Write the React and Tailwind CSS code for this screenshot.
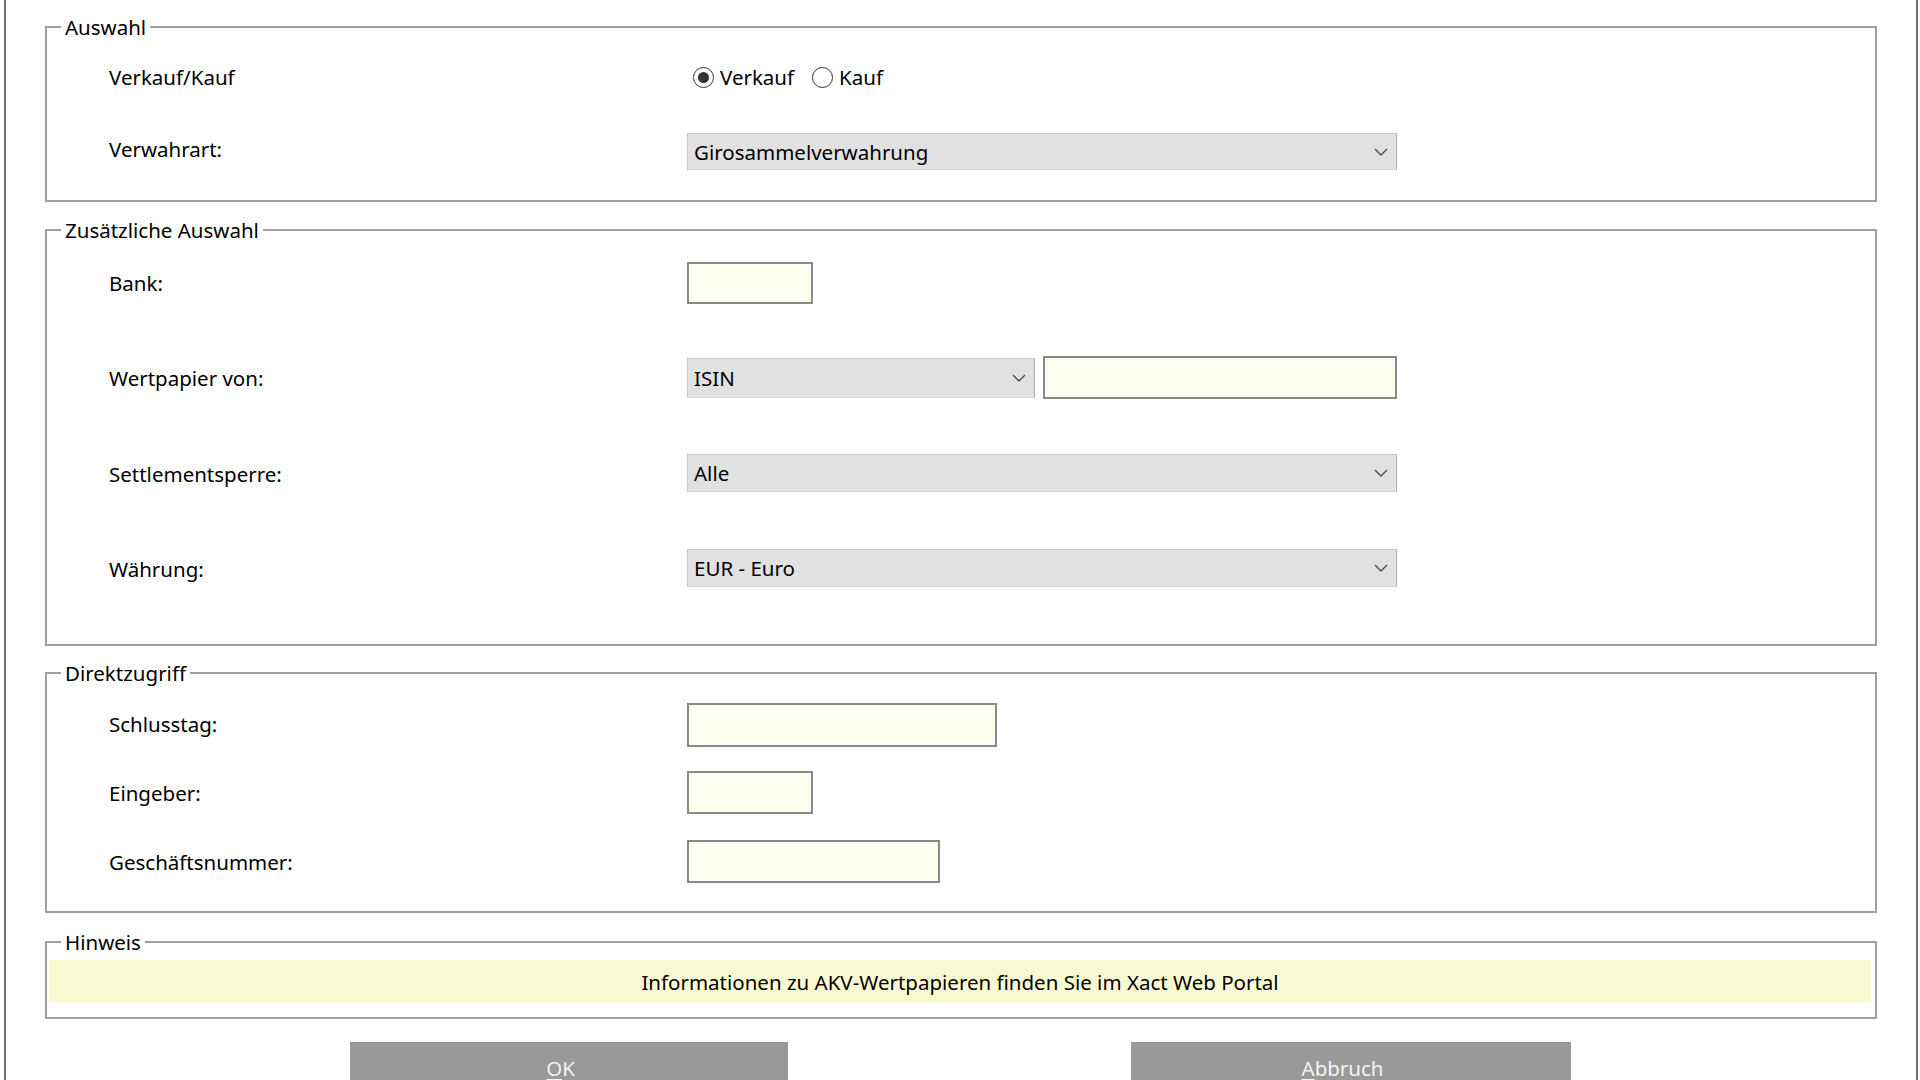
import React from 'react';

const Chevron = () => (
  <svg width="14" height="8" viewBox="0 0 14 8" fill="none">
    <path d="M1 1 L7 7 L13 1" stroke="#4a4a4a" strokeWidth="1.4" />
  </svg>
);

const Select = ({ value, width, height = 'h-[38px]' }) => (
  <div className={`${width} ${height} flex items-center justify-between pl-[6px] pr-[8px] bg-[#e1e1e1] border border-t-[#c6c6c6] border-l-[#c6c6c6] border-r-[#adadad] border-b-[#d6d6d6]`}>
    <span>{value}</span>
    <Chevron />
  </div>
);

const Input = ({ width, height = 'h-[43px]' }) => (
  <div className={`${width} ${height} bg-[#fffff0] border-2 border-[#8a8a8a]`} />
);

const Radio = ({ label, checked }) => (
  <div className="flex items-center">
    <span className="w-[21px] h-[21px] rounded-full border-[1.5px] border-[#333333] flex items-center justify-center">
      {checked && <span className="w-[11px] h-[11px] rounded-full bg-[#333333]" />}
    </span>
    <span className="ml-[6px]">{label}</span>
  </div>
);

const Group = ({ title, height, children, className = '' }) => (
  <fieldset className={`${height} ${className} min-w-0 m-0 p-0 border-2 border-[#a0a0a0]`}>
    <legend className="ml-[14px] px-[4px] leading-[24px]">{title}</legend>
    <div className="pl-[62px]">{children}</div>
  </fieldset>
);

const Row = ({ label, children, className = '', labelClass = '' }) => (
  <div className={`flex items-center ${className}`}>
    <div className={`w-[578px] shrink-0 ${labelClass}`}>{label}</div>
    {children}
  </div>
);

export default function App() {
  return (
    <div className="w-[1920px] h-[1080px] bg-white overflow-hidden text-[20.5px] leading-[24px] text-black font-['Noto_Sans','Open_Sans',Arial,sans-serif]">
      <div className="ml-[4px] w-[1914px] h-full border-x-2 border-[#707070] pl-[39px] pr-[39px] pt-[15px]">

        {/* Auswahl */}
        <Group title="Auswahl" height="h-[187px]">
          <Row label="Verkauf/Kauf" className="mt-[18px] h-[40px]">
            <div className="flex items-center gap-[18px] ml-[6px]">
              <Radio label="Verkauf" checked />
              <Radio label="Kauf" />
            </div>
          </Row>
          <Row label="Verwahrart:" className="mt-[36px]" labelClass="pb-[6px]">
            <Select value="Girosammelverwahrung" width="w-[710px]" height="h-[37px]" />
          </Row>
        </Group>

        {/* Zusätzliche Auswahl */}
        <Group title="Zusätzliche Auswahl" height="h-[428px]" className="mt-[16px]">
          <Row label="Bank:" className="mt-[20px]">
            <Input width="w-[126px]" height="h-[42px]" />
          </Row>
          <Row label="Wertpapier von:" className="mt-[52px]">
            <div className="flex items-center gap-[8px]">
              <Select value="ISIN" width="w-[348px]" height="h-[40px]" />
              <Input width="w-[354px]" />
            </div>
          </Row>
          <Row label="Settlementsperre:" className="mt-[55px]" labelClass="pt-[2px]">
            <Select value="Alle" width="w-[710px]" />
          </Row>
          <Row label="Währung:" className="mt-[57px]" labelClass="pt-[2px]">
            <Select value="EUR - Euro" width="w-[710px]" />
          </Row>
        </Group>

        {/* Direktzugriff */}
        <Group title="Direktzugriff" height="h-[252px]" className="mt-[15px]">
          <Row label="Schlusstag:" className="mt-[18px]" labelClass="pb-[2px]">
            <Input width="w-[310px]" height="h-[44px]" />
          </Row>
          <Row label="Eingeber:" className="mt-[24px]">
            <Input width="w-[126px]" />
          </Row>
          <Row label="Geschäftsnummer:" className="mt-[26px]">
            <Input width="w-[253px]" />
          </Row>
        </Group>

        {/* Hinweis */}
        <fieldset className="h-[89px] mt-[17px] min-w-0 m-0 p-0 border-2 border-[#a0a0a0]">
          <legend className="ml-[14px] px-[4px] leading-[24px]">Hinweis</legend>
          <div className="mt-[6px] ml-[2px] mr-[4px] h-[43px] bg-[#fafad2] flex items-center justify-center">
            Informationen zu AKV-Wertpapieren finden Sie im Xact Web Portal
          </div>
        </fieldset>

        {/* Buttons */}
        <div className="mt-[23px] flex justify-center gap-[343px] pr-[2px]">
          <button className="w-[438px] h-[52px] bg-[#999999] text-[#f4f4f4] flex items-center justify-center pr-[16px]">
            <span><span className="underline underline-offset-[3px]">O</span>K</span>
          </button>
          <button className="w-[440px] h-[52px] bg-[#999999] text-[#f4f4f4] flex items-center justify-center pr-[16px]">
            <span><span className="underline underline-offset-[3px]">A</span>bbruch</span>
          </button>
        </div>
      </div>
    </div>
  );
}
